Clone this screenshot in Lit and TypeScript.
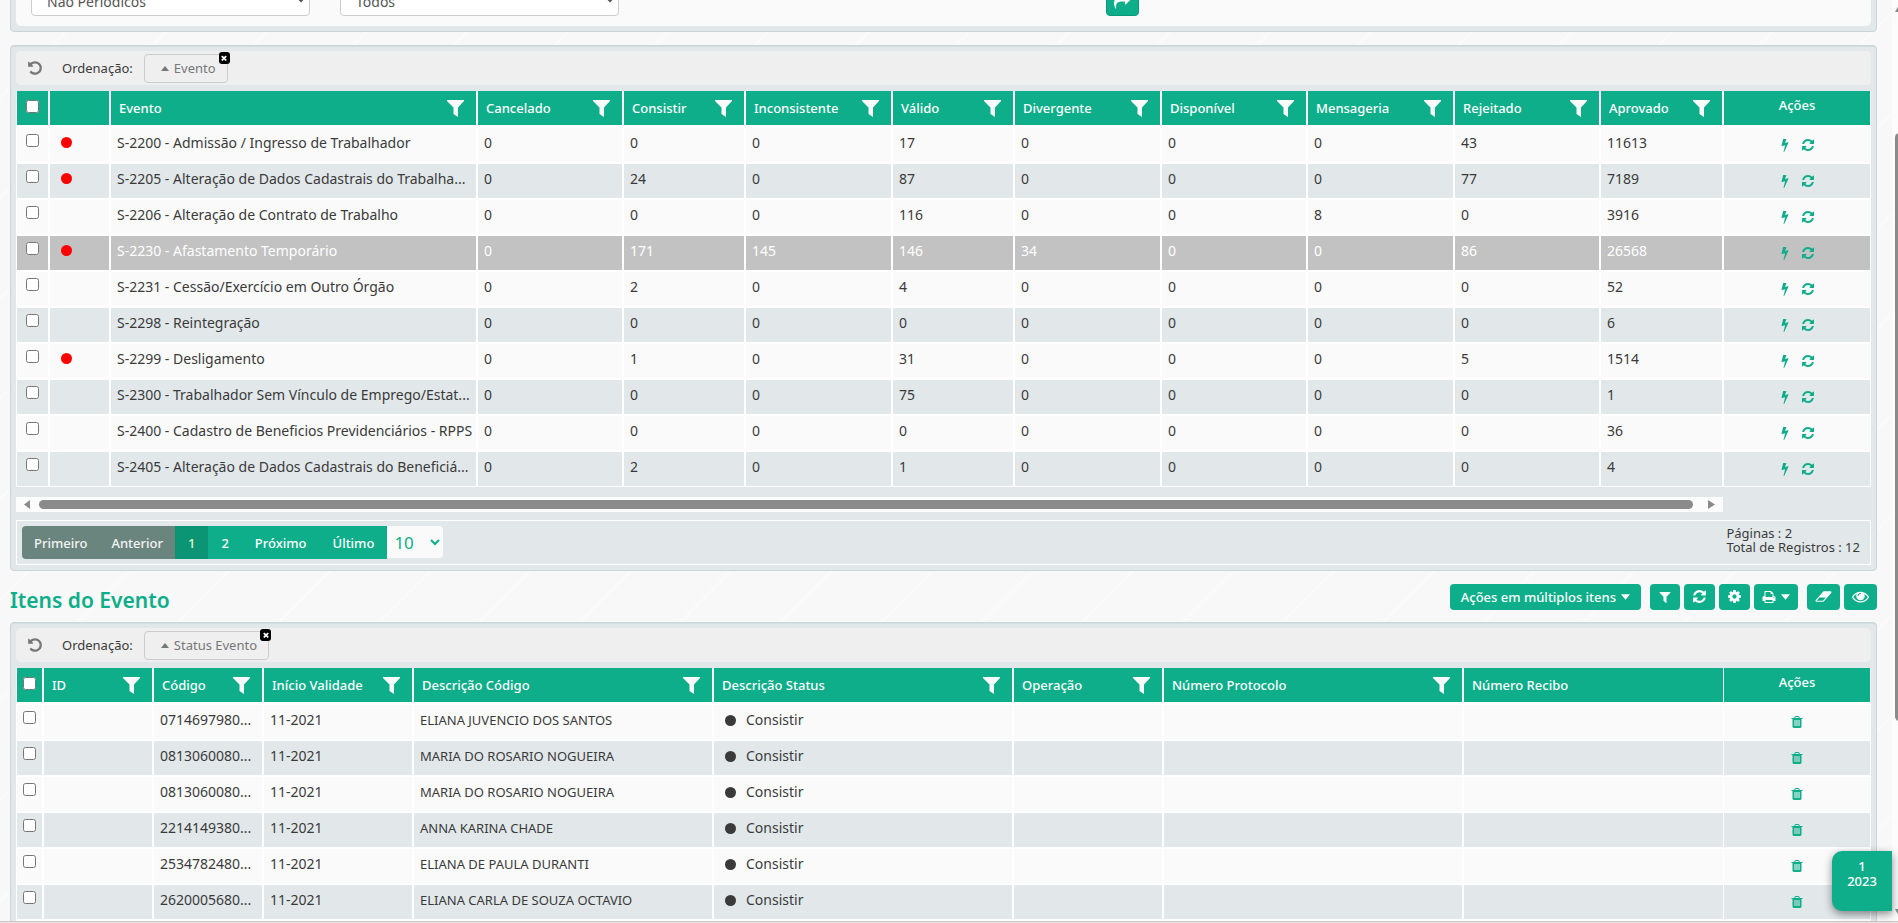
import { LitElement, html, css, svg, nothing } from "lit";
import { customElement } from "lit/decorators.js";
import { classMap } from "lit/directives/class-map.js";

type Column = { label: string; width: number; filter: boolean };

const ICONS: Record<string, { box: string; d: string }> = {
  undo: { box: "0 0 1792 1792", d: "M1664 896q0 156-61 298t-164 245-245 164-298 61q-172 0-327-72.5t-264-204.5q-7-10-6.5-22.5t8.5-20.5l137-138q10-9 25-9 16 2 23 12 73 95 179 147t225 52q104 0 198.5-40.5t163.5-109.5 109.5-163.5 40.5-198.5-40.5-198.5-109.5-163.5-163.5-109.5-198.5-40.5q-98 0-188 35.5t-160 101.5l137 138q31 30 14 69-17 40-59 40h-448q-26 0-45-19t-19-45v-448q0-42 40-59 39-17 69 14l130 129q107-101 244.5-156.5t284.5-55.5q156 0 298 61t245 164 164 245 61 298z" },
  refresh: { box: "0 0 1792 1792", d: "M1639 1056q0 5-1 7-64 268-268 434.5t-478 166.5q-146 0-282.5-55t-243.5-157l-129 129q-19 19-45 19t-45-19-19-45v-448q0-26 19-45t45-19h448q26 0 45 19t19 45-19 45l-137 137q71 66 161 102t187 36q134 0 250-65t186-179q11-17 53-117 8-23 30-23h192q13 0 22.5 9.5t9.5 22.5zm25-800v448q0 26-19 45t-45 19h-448q-26 0-45-19t-19-45 19-45l138-138q-148-137-349-137-134 0-250 65t-186 179q-11 17-53 117-8 23-30 23h-199q-13 0-22.5-9.5t-9.5-22.5v-7q65-268 270-434.5t480-166.5q146 0 284 55.5t245 156.5l130-129q19-19 45-19t45 19 19 45z" },
  bolt: { box: "0 0 1792 1792", d: "M1333 566q18 20 7 44l-540 1157q-13 25-42 25-4 0-14-2-17-5-25.5-19t-4.5-30l197-808-406 101q-4 1-12 1-18 0-31-11-18-15-13-39l201-825q4-14 16-23t28-9h328q19 0 32 12.5t13 29.5q0 8-5 18l-171 463 396-98q8-2 12-2 19 0 34 15z" },
  filter: { box: "0 0 1792 1792", d: "M1595 295q17 41-14 70l-493 493v742q0 42-39 59-13 5-25 5-27 0-45-19l-256-256q-19-19-19-45v-486l-493-493q-31-29-14-70 17-39 59-39h1280q42 0 59 39z" },
  cog: { box: "0 0 1792 1792", d: "M1152 896q0-106-75-181t-181-75-181 75-75 181 75 181 181 75 181-75 75-181zm512-109v222q0 12-8 23t-20 13l-185 28q-19 54-39 91 35 50 107 138 10 12 10 25t-9 23q-27 37-99 108t-94 71q-12 0-26-9l-138-108q-44 23-91 38-16 136-29 186-7 28-36 28h-222q-14 0-24.5-8.5t-11.5-21.5l-28-184q-49-16-90-37l-141 107q-10 9-25 9-14 0-25-11-126-114-165-168-7-10-7-23 0-12 8-23 15-21 51-66.5t54-70.5q-27-50-41-99l-183-27q-13-2-21-12.5t-8-23.5v-222q0-12 8-23t19-13l186-28q14-46 39-92-40-57-107-138-10-12-10-24 0-10 9-23 26-36 98.5-107.5t94.5-71.5q13 0 26 10l138 107q44-23 91-38 16-136 29-186 7-28 36-28h222q14 0 24.5 8.5t11.5 21.5l28 184q49 16 90 37l142-107q9-9 24-9 13 0 25 10 129 119 165 170 7 8 7 22 0 12-8 23-15 21-51 66.5t-54 70.5q26 50 41 98l183 28q13 2 21 12.5t8 23.5z" },
  print: { box: "0 0 1792 1792", d: "M448 1536h896v-256h-896v256zm0-640h896v-384h-160q-40 0-68-28t-28-68v-160h-640v640zm1152 64q0-26-19-45t-45-19-45 19-19 45 19 45 45 19 45-19 19-45zm128 0v416q0 13-9.5 22.5t-22.5 9.500h-224v160q0 40-28 68t-68 28h-960q-40 0-68-28t-28-68v-160h-224q-13 0-22.5-9.5t-9.5-22.5v-416q0-79 56.5-135.5t135.5-56.5h64v-544q0-40 28-68t68-28h672q40 0 88 20t76 48l152 152q28 28 48 76t20 88v256h64q79 0 135.500 56.5t56.500 135.5z" },
  eraser: { box: "0 0 2048 1792", d: "M960 1408l336-384h-768l-336 384h768zm1013-1077q15 34 9.5 71.5t-30.5 65.5l-896 1024q-38 44-96 44h-768q-38 0-69.500-20.5t-47.5-54.5q-15-34-9.5-71.5t30.5-65.5l896-1024q38-44 96-44h768q38 0 69.5 20.5t47.5 54.5z" },
  eye: { box: "0 0 1792 1792", d: "M1664 960q-152-236-381-353 61 104 61 225 0 185-131.5 316.5t-316.5 131.5-316.5-131.5-131.5-316.5q0-121 61-225-229 117-381 353 133 205 333.5 326.5t434.5 121.5 434.5-121.5 333.5-326.5zm-720-384q0-20-14-34t-34-14q-125 0-214.5 89.5t-89.5 214.5q0 20 14 34t34 14 34-14 14-34q0-86 61-147t147-61q20 0 34-14t14-34zm848 384q0 34-20 69-140 230-376.5 368.5t-499.5 138.5-499.5-139-376.5-368q-20-35-20-69t20-69q140-229 376.5-368t499.5-139 499.5 139 376.5 368q20 35 20 69z" },
  trash: { box: "0 0 1792 1792", d: "M704 1376v-704q0-14-9-23t-23-9h-64q-14 0-23 9t-9 23v704q0 14 9 23t23 9h64q14 0 23-9t9-23zm256 0v-704q0-14-9-23t-23-9h-64q-14 0-23 9t-9 23v704q0 14 9 23t23 9h64q14 0 23-9t9-23zm256 0v-704q0-14-9-23t-23-9h-64q-14 0-23 9t-9 23v704q0 14 9 23t23 9h64q14 0 23-9t9-23zm-544-992h448l-48-117q-7-9-17-11h-317q-10 2-17 11zm928 32v64q0 14-9 23t-23 9h-96v948q0 83-47 143.5t-113 60.5h-832q-66 0-113-58.5t-47-141.5v-952h-96q-14 0-23-9t-9-23v-64q0-14 9-23t23-9h309l70-167q15-37 54-63t79-26h320q40 0 79 26t54 63l70 167h309q14 0 23 9t9 23z" },
  share: { box: "0 0 1792 1792", d: "M1792 640q0 26-19 45l-512 512q-19 19-45 19t-45-19-19-45v-256h-224q-98 0-175.5 6t-154 21.5-133 42.5-105.5 69.5-80 101-48.5 138.5-17.5 181q0 55 5 123 0 6 2.5 23.5t2.5 26.5q0 15-8.5 25t-23.5 10q-16 0-28-17-7-9-13-22t-13.5-30-10.5-24q-127-285-127-451 0-199 53-333 162-403 875-403h224v-256q0-26 19-45t45-19 45 19l512 512q19 19 19 45z" },
  times: { box: "0 0 1792 1792", d: "M1490 1322q0 40-28 68l-136 136q-28 28-68 28t-68-28l-294-294-294 294q-28 28-68 28t-68-28l-136-136q-28-28-28-68t28-68l294-294-294-294q-28-28-28-68t28-68l136-136q28-28 68-28t68 28l294 294 294-294q28-28 68-28t68 28l136 136q28 28 28 68t-28 68l-294 294 294 294q28 28 28 68z" },
  funnel: { box: "0 0 17 17", d: "M0 0h17v1L11 7.500V17L6.500 14V7.500L0 1z" },
  caret: { box: "0 0 8 5", d: "M0 0h8L4 5z" },
  up: { box: "0 0 8 5", d: "M0 5h8L4 0z" },
};

const icon = (name: string, cls = "i14") =>
  html`<svg class=${cls} viewBox=${ICONS[name].box} aria-hidden="true">${svg`<path d=${ICONS[name].d} fill-rule="evenodd"></path>`}</svg>`;

const col = (label: string, width: number, filter = true): Column => ({ label, width, filter });

const EVENT_COLUMNS: Column[] = [
  col("Evento", 367), col("Cancelado", 146), col("Consistir", 122), col("Inconsistente", 147),
  col("Válido", 122), col("Divergente", 147), col("Disponível", 146), col("Mensageria", 147),
  col("Rejeitado", 146), col("Aprovado", 123),
];

const EVENTS: { alert?: boolean; selected?: boolean; cells: (string | number)[] }[] = [
  { alert: true, cells: ["S-2200 - Admissão / Ingresso de Trabalhador", 0, 0, 0, 17, 0, 0, 0, 43, 11613] },
  { alert: true, cells: ["S-2205 - Alteração de Dados Cadastrais do Trabalha...", 0, 24, 0, 87, 0, 0, 0, 77, 7189] },
  { cells: ["S-2206 - Alteração de Contrato de Trabalho", 0, 0, 0, 116, 0, 0, 8, 0, 3916] },
  { alert: true, selected: true, cells: ["S-2230 - Afastamento Temporário", 0, 171, 145, 146, 34, 0, 0, 86, 26568] },
  { cells: ["S-2231 - Cessão/Exercício em Outro Órgão", 0, 2, 0, 4, 0, 0, 0, 0, 52] },
  { cells: ["S-2298 - Reintegração", 0, 0, 0, 0, 0, 0, 0, 0, 6] },
  { alert: true, cells: ["S-2299 - Desligamento", 0, 1, 0, 31, 0, 0, 0, 5, 1514] },
  { cells: ["S-2300 - Trabalhador Sem Vínculo de Emprego/Estat...", 0, 0, 0, 75, 0, 0, 0, 0, 1] },
  { cells: ["S-2400 - Cadastro de Beneficios Previdenciários - RPPS", 0, 0, 0, 0, 0, 0, 0, 0, 36] },
  { cells: ["S-2405 - Alteração de Dados Cadastrais do Beneficiá...", 0, 2, 0, 1, 0, 0, 0, 0, 4] },
];

const ITEM_COLUMNS: Column[] = [
  col("ID", 110), col("Código", 110), col("Início Validade", 150), col("Descrição Código", 300),
  col("Descrição Status", 300), col("Operação", 150), col("Número Protocolo", 300), col("Número Recibo", 260, false),
];

const ITEMS = [
  ["0714697980...", "ELIANA JUVENCIO DOS SANTOS"],
  ["0813060080...", "MARIA DO ROSARIO NOGUEIRA"],
  ["0813060080...", "MARIA DO ROSARIO NOGUEIRA"],
  ["2214149380...", "ANNA KARINA CHADE"],
  ["2534782480...", "ELIANA DE PAULA DURANTI"],
  ["2620005680...", "ELIANA CARLA DE SOUZA OCTAVIO"],
];

@customElement("app-root")
export class AppRoot extends LitElement {
  static styles = css`
    :host {
      --green: #0dae89;
      --mist: #e2e8ea;
      --paper: #fafafa;
      display: flex;
      flex-direction: column;
      height: 100vh;
      overflow: hidden;
      font: 14px/20px "Noto Sans", "Open Sans", sans-serif;
      color: #3a3a3a;
      background: repeating-linear-gradient(135deg, #f8f8f8 0 67px, #fbfbfb 69px, #f8f8f8 71px);
    }
    * { box-sizing: border-box; }
    button, select { font: inherit; margin: 0; }
    button { cursor: pointer; }
    svg { display: block; fill: currentColor; flex: none; }
    .i14 { width: 14px; height: 14px; }
    .i15 { width: 15px; height: 15px; }
    .i16 { width: 16px; height: 16px; }
    .i17 { width: 17px; height: 17px; }
    .i8 { width: 8px; height: 8px; }
    .caret { width: 8px; height: 5px; }
    .view { flex: 1; min-height: 0; display: flex; }
    main { flex: 1; min-width: 0; overflow: hidden; padding: 0 15px 0 10px; }
    .edge { flex: none; height: 2px; border-top: 1px solid #cdc8c8; background: #ecdfdf; }

    .panel {
      border: 1px solid #c9d5d8;
      border-radius: 4px;
      padding: 5px;
      background: var(--mist);
      box-shadow: inset 0 1px 1px rgba(0, 0, 0, 0.05);
    }
    .panel.search { margin: -34px 0 13px; }
    .search-box {
      display: grid;
      grid-template-columns: 309fr 309fr 472fr 765fr;
      padding: 10px 0;
      border-radius: 5px;
      background: var(--paper);
    }
    .field { padding: 0 15px; }
    .field select {
      display: block;
      width: 100%;
      height: 34px;
      padding: 4px 0 0 11px;
      border: 1px solid #ccc;
      border-radius: 4px;
      background: #fff;
      color: #555;
    }
    .go {
      grid-column: 4;
      display: grid;
      place-items: center;
      width: 33px;
      height: 34px;
      padding: 4px 0 0;
      border: 1px solid #0b9a79;
      border-radius: 4px;
      background: var(--green);
      color: #fff;
    }

    .sort {
      display: flex;
      align-items: center;
      height: 34px;
      margin-bottom: 6px;
      padding-left: 11px;
      border-radius: 5px;
      background: #efefef;
      font-size: 13px;
    }
    .reset { padding: 0; border: 0; background: none; color: #777; }
    .sort-label { margin: 0 11px 0 19px; }
    .chip {
      position: relative;
      display: flex;
      align-items: center;
      gap: 5px;
      height: 29px;
      padding: 0 11px 0 16px;
      border: 1px solid #ccc;
      border-radius: 4px;
      color: #777;
    }
    .chip-close {
      position: absolute;
      top: -3px;
      right: -3px;
      display: grid;
      place-items: center;
      width: 11px;
      height: 12px;
      padding: 0;
      border: 0;
      border-radius: 3px;
      background: #000;
      color: #fff;
    }

    table { width: 100%; table-layout: fixed; border-collapse: separate; border-spacing: 0; }
    th, td { height: 36px; padding: 0; border: 1px solid #fff; vertical-align: top; text-align: left; }
    th { border-top: 0; border-bottom-width: 2px; background: var(--green); color: #fff; font-weight: 500; font-size: 13px; }
    th.ops { padding-top: 4px; text-align: center; }
    .head { display: flex; justify-content: space-between; padding: 7px 12px 0 8px; white-space: nowrap; }
    .head button { padding: 1px 0 0; border: 0; background: none; color: var(--paper); }
    .tick { display: block; width: 13px; height: 13px; margin: 6px auto 0; }
    th .tick { margin-top: 9px; }
    td { background: var(--paper); padding: 5px 0 0 6px; white-space: nowrap; overflow: hidden; }
    tr:nth-child(even) td { background: var(--mist); }
    tr.selected td { background: #c2c2c2; color: #fff; }
    td.pick { padding: 0; }
    td.person { font-size: 13px; }
    .dot { display: inline-block; width: 11px; height: 11px; border-radius: 50%; background: #3a3a3a; }
    td.flag { padding: 9px 0 0 11px; line-height: 11px; }
    .flag .dot { background: #f00; display: block; }
    .status { display: flex; align-items: center; gap: 10px; padding-left: 5px; }
    td.ops { padding: 0; }
    .acts { display: flex; justify-content: center; align-items: center; gap: 9px; height: 34px; padding-right: 2px; }
    .acts.single { padding-right: 0; }
    .acts a { color: var(--green); }
    .items th:nth-last-child(2), .items td:nth-last-child(2) { border-right: 0; }
    .items { border-bottom: 1px solid #fff; }

    .hbar {
      display: flex;
      align-items: center;
      gap: 8px;
      width: calc(100% - 148px);
      height: 15px;
      margin-top: 10px;
      padding: 0 8px;
      background: #fcfcfc;
      color: #8b8b8b;
    }
    .hthumb { flex: 1; height: 9px; margin-right: 7px; border-radius: 5px; background: #8b8b8b; }
    .tri { width: 7px; height: 9px; }
    .pager {
      display: flex;
      justify-content: space-between;
      align-items: flex-start;
      height: 45px;
      margin-top: 8px;
      padding: 5px;
      border: 1px solid #fff;
    }
    .pages { display: flex; align-items: flex-start; font-size: 13px; font-weight: 500; }
    .pages button { height: 33px; padding: 0 13px; border: 0; background: var(--green); color: #fff; }
    .pages button:first-child { border-radius: 4px 0 0 4px; }
    .pages button:disabled { padding: 0 12px; background: #6a857d; color: #f4f4f4; }
    .pages button.current { background: #0b9575; color: #e3f7c4; }
    .pages select {
      width: 56px;
      height: 32px;
      padding: 0 0 0 3px;
      border: 0;
      border-radius: 0 4px 4px 0;
      background: var(--paper);
      color: var(--green);
      font-size: 17px;
      font-weight: 400;
    }
    .totals { display: grid; margin: 0; padding: 0 5px; font-size: 13px; line-height: 14px; }

    .section { display: flex; align-items: center; justify-content: space-between; height: 51px; }
    h2 { margin: 0; padding-top: 6px; font-size: 21px; line-height: 24px; font-weight: 600; color: var(--green); }
    .tools { display: flex; gap: 4px; }
    .tools button {
      display: flex;
      align-items: center;
      justify-content: center;
      gap: 5px;
      height: 26px;
      padding: 0 9px;
      border: 0;
      border-radius: 4px;
      background: var(--green);
      color: #fff;
      font-size: 13px;
      font-weight: 500;
    }
    .tools .caret { width: 9px; height: 6px; }
    .tools button.apart { margin-right: 5px; }
    .tools button.menu { padding: 0 11px; }
    .tools button.icon { padding: 0 8px; }

    .vbar { flex: none; display: flex; flex-direction: column; width: 6px; padding: 4px 0 4px 3px; overflow: hidden; background: #fcfcfc; color: #8b8b8b; }
    .vtri { width: 9px; height: 8px; }
    .vspace { flex: 121; }
    .vthumb { flex: 588; width: 9px; border-radius: 5px; background: #8b8b8b; }
    .vrest { flex: 188; }
    .period {
      position: absolute;
      right: 6px;
      bottom: 12px;
      display: flex;
      flex-direction: column;
      align-items: center;
      justify-content: flex-start;
      width: 60px;
      height: 60px;
      padding: 8px 0 0;
      border: 0;
      border-radius: 10px 0 0 10px;
      background: var(--green);
      box-shadow: 0 3px 8px rgba(0, 0, 0, 0.45);
      color: #fff;
      font-size: 13px;
      font-weight: 500;
      line-height: 15px;
    }
  `;

  private sortBar(field: string) {
    return html`<div class="sort">
      <button class="reset" aria-label="Desfazer ordenação">${icon("undo", "i16")}</button>
      <span class="sort-label">Ordenação:</span>
      <span class="chip">${icon("up", "caret")}${field}
        <button class="chip-close" aria-label="Remover">${icon("times", "i8")}</button>
      </span>
    </div>`;
  }

  private headCells(columns: Column[]) {
    return columns.map(
      (c) => html`<th scope="col"><div class="head"><span>${c.label}</span>${c.filter
        ? html`<button aria-label="Filtrar ${c.label}">${icon("funnel", "i17")}</button>`
        : nothing}</div></th>`,
    );
  }

  private cols(widths: number[]) {
    return html`<colgroup>${widths.map((w) => html`<col style="width:${w}px" />`)}</colgroup>`;
  }

  private eventTable() {
    return html`<table>
      ${this.cols([33, 61, ...EVENT_COLUMNS.map((c) => c.width), 148])}
      <thead><tr>
        <th><input class="tick" type="checkbox" aria-label="Selecionar todos" /></th><th></th>
        ${this.headCells(EVENT_COLUMNS)}
        <th class="ops" scope="col">Ações</th>
      </tr></thead>
      <tbody>${EVENTS.map((e) => html`<tr class=${classMap({ selected: !!e.selected })}>
        <td class="pick"><input class="tick" type="checkbox" aria-label=${String(e.cells[0])} /></td>
        <td class="flag">${e.alert ? html`<span class="dot"></span>` : nothing}</td>
        ${e.cells.map((v) => html`<td>${v}</td>`)}
        <td class="ops"><div class="acts">
          <a href="#" aria-label="Processar">${icon("bolt", "i14")}</a>
          <a href="#" aria-label="Atualizar">${icon("refresh", "i14")}</a>
        </div></td>
      </tr>`)}</tbody>
    </table>`;
  }

  private itemTable() {
    return html`<table class="items">
      ${this.cols([27, ...ITEM_COLUMNS.map((c) => c.width), 148])}
      <thead><tr>
        <th><input class="tick" type="checkbox" aria-label="Selecionar todos" /></th>
        ${this.headCells(ITEM_COLUMNS)}
        <th class="ops" scope="col">Ações</th>
      </tr></thead>
      <tbody>${ITEMS.map(([code, person]) => html`<tr>
        <td class="pick"><input class="tick" type="checkbox" aria-label=${person} /></td>
        <td></td><td>${code}</td><td>11-2021</td><td class="person">${person}</td>
        <td><div class="status"><span class="dot"></span>Consistir</div></td>
        <td></td><td></td><td></td>
        <td class="ops"><div class="acts single"><a href="#" aria-label="Excluir">${icon("trash", "i14")}</a></div></td>
      </tr>`)}</tbody>
    </table>`;
  }

  render() {
    return html`
      <div class="view">
        <main>
          <section class="panel search">
            <div class="search-box">
              <div class="field"><select aria-label="Tipo de evento"><option>Não Periódicos</option></select></div>
              <div class="field"><select aria-label="Situação"><option>Todos</option></select></div>
              <button class="go" aria-label="Pesquisar">${icon("share", "i17")}</button>
            </div>
          </section>

          <section class="panel">
            ${this.sortBar("Evento")}
            ${this.eventTable()}
            <div class="hbar">
              <svg class="tri" viewBox="0 0 7 9"><path d="M6 0v9L0 4.500z"></path></svg>
              <div class="hthumb"></div>
              <svg class="tri" viewBox="0 0 7 9"><path d="M0 0v9l7-4.500z"></path></svg>
            </div>
            <div class="pager">
              <nav class="pages">
                <button disabled>Primeiro</button><button disabled>Anterior</button><button class="current">1</button><button>2</button><button>Próximo</button><button>Último</button>
                <select aria-label="Registros por página"><option>10</option></select>
              </nav>
              <div class="totals"><span>Páginas : 2</span><span>Total de Registros : 12</span></div>
            </div>
          </section>

          <header class="section">
            <h2>Itens do Evento</h2>
            <div class="tools">
              <button class="apart menu">Ações em múltiplos itens ${icon("caret", "caret")}</button>
              <button class="icon" aria-label="Filtrar">${icon("filter", "i14")}</button>
              <button class="icon" aria-label="Atualizar">${icon("refresh", "i15")}</button>
              <button class="icon" aria-label="Configurar">${icon("cog", "i15")}</button>
              <button class="apart icon" aria-label="Imprimir">${icon("print", "i14")}${icon("caret", "caret")}</button>
              <button class="icon" aria-label="Limpar">${icon("eraser", "i17")}</button>
              <button class="icon" aria-label="Visualizar">${icon("eye", "i17")}</button>
            </div>
          </header>

          <section class="panel">
            ${this.sortBar("Status Evento")}
            ${this.itemTable()}
          </section>
        </main>
        <div class="vbar">
          <svg class="vtri" viewBox="0 0 9 8"><path d="M0 8h9L4.500 0z"></path></svg>
          <div class="vspace"></div>
          <div class="vthumb"></div>
          <div class="vrest"></div>
          <svg class="vtri" viewBox="0 0 9 8"><path d="M0 0h9L4.500 8z"></path></svg>
        </div>
      </div>
      <div class="edge"></div>
      <button class="period"><span>1</span><span>2023</span></button>
    `;
  }
}
